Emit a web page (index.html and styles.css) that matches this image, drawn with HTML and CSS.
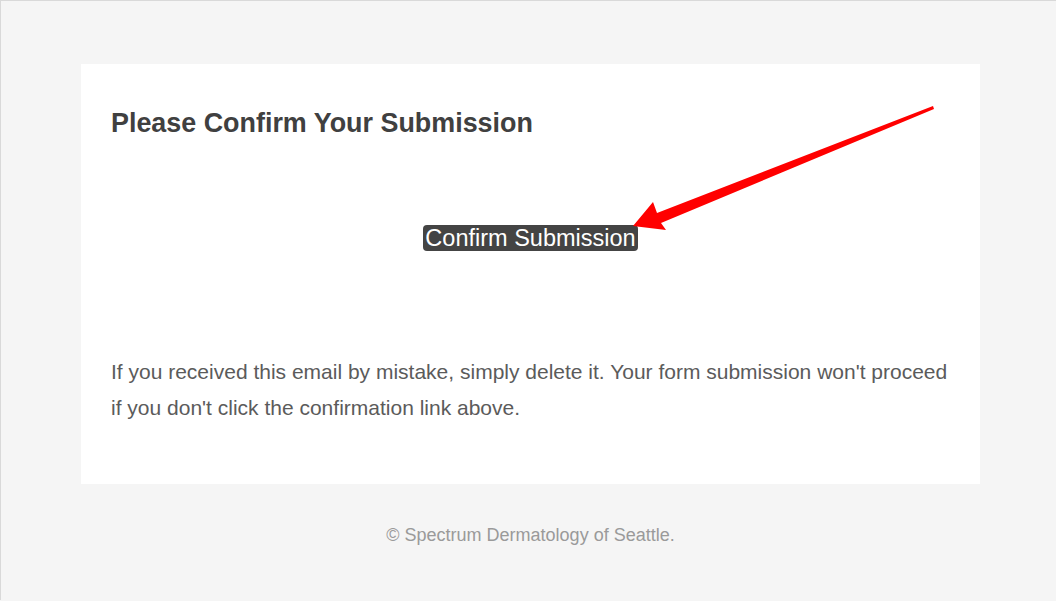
FILE: index.html
```html
<!DOCTYPE html>
<html lang="en">
<head>
<meta charset="utf-8">
<title>Please Confirm Your Submission</title>
<link rel="stylesheet" href="styles.css">
</head>
<body>
<div class="page">
  <div class="card">
    <h1 class="title">Please Confirm Your Submission</h1>
    <div class="action">
      <a class="btn" href="#">Confirm Submission</a>
    </div>
    <p class="note">If you received this email by mistake, simply delete it. Your form submission won't proceed if you don't click the confirmation link above.</p>
  </div>
  <div class="footer">© Spectrum Dermatology of Seattle.</div>
</div>
<svg class="annot" width="1056" height="601" viewBox="0 0 1056 601" xmlns="http://www.w3.org/2000/svg">
  <polygon points="933,106 657,213 653,202 633,226 666,230 661,223 934,109" fill="#ff0000"/>
</svg>
</body>
</html>
```

FILE: styles.css
```css
html, body {
  margin: 0;
  padding: 0;
}
body {
  background: #f5f5f5;
  border-top: 1px solid #d9d9d9;
  border-left: 1px solid #d9d9d9;
  font-family: "Liberation Sans", Arial, sans-serif;
  min-height: 600px;
  box-sizing: border-box;
}
.page {
  padding: 63px 0 0 80px;
}
.card {
  width: 899px;
  box-sizing: border-box;
  background: #ffffff;
  padding: 30px 28px 30px 30px;
}
.title {
  margin: 14px 0 0 0;
  font-size: 26.9px;
  line-height: 30px;
  font-weight: bold;
  color: #404040;
}
.action {
  margin: 87px 2px 0 0;
  text-align: center;
  line-height: 26px;
  height: 26px;
}
.btn {
  display: inline-block;
  background: #444444;
  color: #ffffff;
  font-size: 23.5px;
  line-height: 26px;
  padding: 0 2px;
  border-radius: 4px;
  text-decoration: none;
  vertical-align: top;
}
.note {
  margin: 103px 0 28px 0;
  font-size: 21px;
  line-height: 36px;
  color: #5b5b5b;
}
.footer {
  width: 899px;
  margin-top: 41px;
  text-align: center;
  font-size: 18px;
  line-height: 20px;
  color: #9a9a9a;
}
.annot {
  position: absolute;
  top: 0;
  left: 0;
  pointer-events: none;
}
```
